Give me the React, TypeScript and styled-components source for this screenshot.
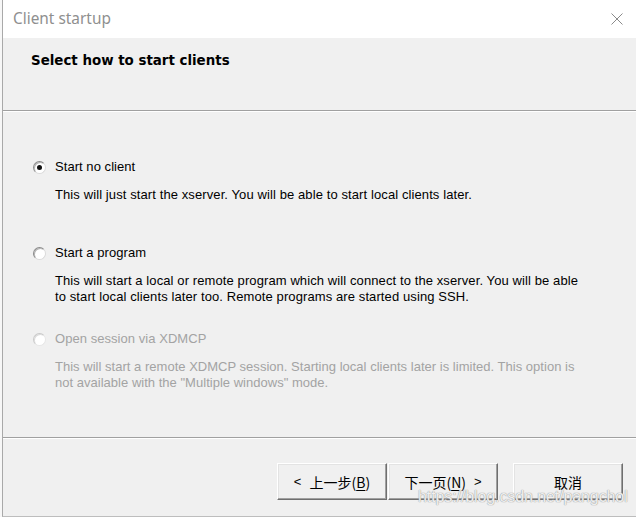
import React from "react";
import styled, { createGlobalStyle } from "styled-components";

const GlobalStyle = createGlobalStyle`
  html, body { margin: 0; padding: 0; background: #f7f7f7; }
  #root { width: 636px; height: 517px; overflow: hidden; }
`;

const Desktop = styled.div`
  width: 636px;
  height: 517px;
  display: flex;
  background: #f7f7f7;
  position: relative;
`;

const Window = styled.div`
  margin-left: 2px;
  flex: 1;
  display: flex;
  flex-direction: column;
  border-left: 1px solid #a9a9a9;
  border-bottom: 1px solid #bdbdbd;
  background: #f0f0f0;
  font-family: "Liberation Sans", Arial, sans-serif;
`;

const TitleBar = styled.div`
  height: 38px;
  flex: none;
  background: #ffffff;
  display: flex;
  align-items: center;
  justify-content: space-between;
  padding: 0 13px 0 10px;
`;

const TitleText = styled.span`
  font-family: "Noto Sans", "Open Sans", sans-serif;
  font-size: 15.4px;
  color: #8f8f8f;
  margin-top: -2px;
`;

const CloseIcon = styled.svg`
  width: 12px;
  height: 12px;
  margin-top: -1px;
`;

const Header = styled.div`
  height: 72px;
  flex: none;
  background: #f0f0f0;
  padding: 15px 0 0 28px;
  box-sizing: border-box;
`;

const HeaderTitle = styled.div`
  font-family: "DejaVu Sans", Verdana, sans-serif;
  font-weight: bold;
  font-size: 13.4px;
  line-height: 16px;
  color: #000;
`;

const Separator = styled.div`
  height: 1px;
  flex: none;
  background: #a0a0a0;
  border-bottom: 1px solid #ffffff;
`;

const Body = styled.div`
  height: 325px;
  flex: none;
  box-sizing: border-box;
  padding: 47px 0 0 30px;
  display: flex;
  flex-direction: column;
`;

const Option = styled.div`
  height: 86px;
  flex: none;
  display: flex;
  flex-direction: column;
`;

const OptionLabel = styled.label<{ $disabled?: boolean }>`
  display: flex;
  align-items: center;
  gap: 9px;
  font-size: 13px;
  line-height: 16px;
  letter-spacing: 0.05px;
  color: ${(p) => (p.$disabled ? "#a3a3a3" : "#000")};
`;

const Radio = styled.span<{ $checked?: boolean; $disabled?: boolean }>`
  width: 11px;
  height: 11px;
  border-radius: 50%;
  flex: none;
  position: relative;
  background: #ffffff;
  border: 1px solid ${(p) => (p.$disabled ? "#c8c8c8" : "#8a8a8a")};
  border-right-color: ${(p) => (p.$disabled ? "#e6e6e6" : "#dadada")};
  border-bottom-color: ${(p) => (p.$disabled ? "#e6e6e6" : "#dadada")};
  box-shadow: inset 1px 1px 0 ${(p) => (p.$disabled ? "#dcdcdc" : "#b5b5b5")};
  &::after {
    content: "";
    display: ${(p) => (p.$checked ? "block" : "none")};
    position: absolute;
    left: 3px;
    top: 3px;
    width: 5px;
    height: 5px;
    border-radius: 50%;
    background: #111;
  }
`;

const Description = styled.div<{ $disabled?: boolean }>`
  margin: 12px 0 0 22px;
  font-size: 13px;
  line-height: 16px;
  letter-spacing: ${(p) => (p.$disabled ? "0.02px" : "0.1px")};
  white-space: nowrap;
  color: ${(p) => (p.$disabled ? "#a3a3a3" : "#000")};
`;

const Footer = styled.div`
  flex: 1;
  display: flex;
  justify-content: flex-end;
  align-items: flex-start;
  padding: 24px 13px 0 0;
`;

const ButtonGroup = styled.div`
  display: flex;
  gap: 1px;
  margin-right: 15px;
`;

const Button = styled.button`
  width: 110px;
  height: 37px;
  box-sizing: border-box;
  background: #f0f0f0;
  border: 1px solid;
  border-color: #ffffff #6f6f6f #6f6f6f #ffffff;
  box-shadow: inset -1px -1px 0 #a0a0a0, inset 1px 1px 0 #e3e3e3;
  font-family: "Noto Sans CJK SC", "Liberation Sans", sans-serif;
  font-size: 14px;
  color: #000;
  padding: 0;
  display: flex;
  align-items: center;
  justify-content: center;
`;

const Arrow = styled.span<{ $side: "left" | "right" }>`
  font-family: "Liberation Sans", Arial, sans-serif;
  font-size: 13px;
  margin: ${(p) => (p.$side === "left" ? "0 8px 0 0" : "0 0 0 8px")};
`;

const Key = styled.span`
  text-decoration: underline;
  text-underline-offset: 2px;
`;

const Watermark = styled.div`
  position: absolute;
  left: 418px;
  top: 488px;
  font-family: "Liberation Sans", Arial, sans-serif;
  font-size: 16px;
  color: rgba(255, 255, 255, 0.85);
  text-shadow: 0 0 1px #9a9a9a, 0 0 1px #9a9a9a;
  pointer-events: none;
  letter-spacing: -0.1px;
`;

export default function App() {
  return (
    <>
      <GlobalStyle />
      <Desktop>
        <Window>
          <TitleBar>
            <TitleText>Client startup</TitleText>
            <CloseIcon viewBox="0 0 12 12">
              <path d="M0.5 0.5 L11.5 11.5 M11.5 0.5 L0.5 11.5" stroke="#8a8a8a" strokeWidth="1" fill="none" />
            </CloseIcon>
          </TitleBar>
          <Header>
            <HeaderTitle>Select how to start clients</HeaderTitle>
          </Header>
          <Separator />
          <Body>
            <Option>
              <OptionLabel>
                <Radio $checked />
                Start no client
              </OptionLabel>
              <Description>
                This will just start the xserver. You will be able to start local clients later.
              </Description>
            </Option>
            <Option>
              <OptionLabel>
                <Radio />
                Start a program
              </OptionLabel>
              <Description>
                This will start a local or remote program which will connect to the xserver. You will be able
                <br />
                to start local clients later too. Remote programs are started using SSH.
              </Description>
            </Option>
            <Option>
              <OptionLabel $disabled>
                <Radio $disabled />
                Open session via XDMCP
              </OptionLabel>
              <Description $disabled>
                This will start a remote XDMCP session. Starting local clients later is limited. This option is
                <br />
                not available with the "Multiple windows" mode.
              </Description>
            </Option>
          </Body>
          <Separator />
          <Footer>
            <ButtonGroup>
              <Button>
                <Arrow $side="left">&lt;</Arrow>
                上一步(<Key>B</Key>)
              </Button>
              <Button>
                下一页(<Key>N</Key>)
                <Arrow $side="right">&gt;</Arrow>
              </Button>
            </ButtonGroup>
            <Button>取消</Button>
          </Footer>
        </Window>
        <Watermark>https://blog.csdn.net/pangchol</Watermark>
      </Desktop>
    </>
  );
}
